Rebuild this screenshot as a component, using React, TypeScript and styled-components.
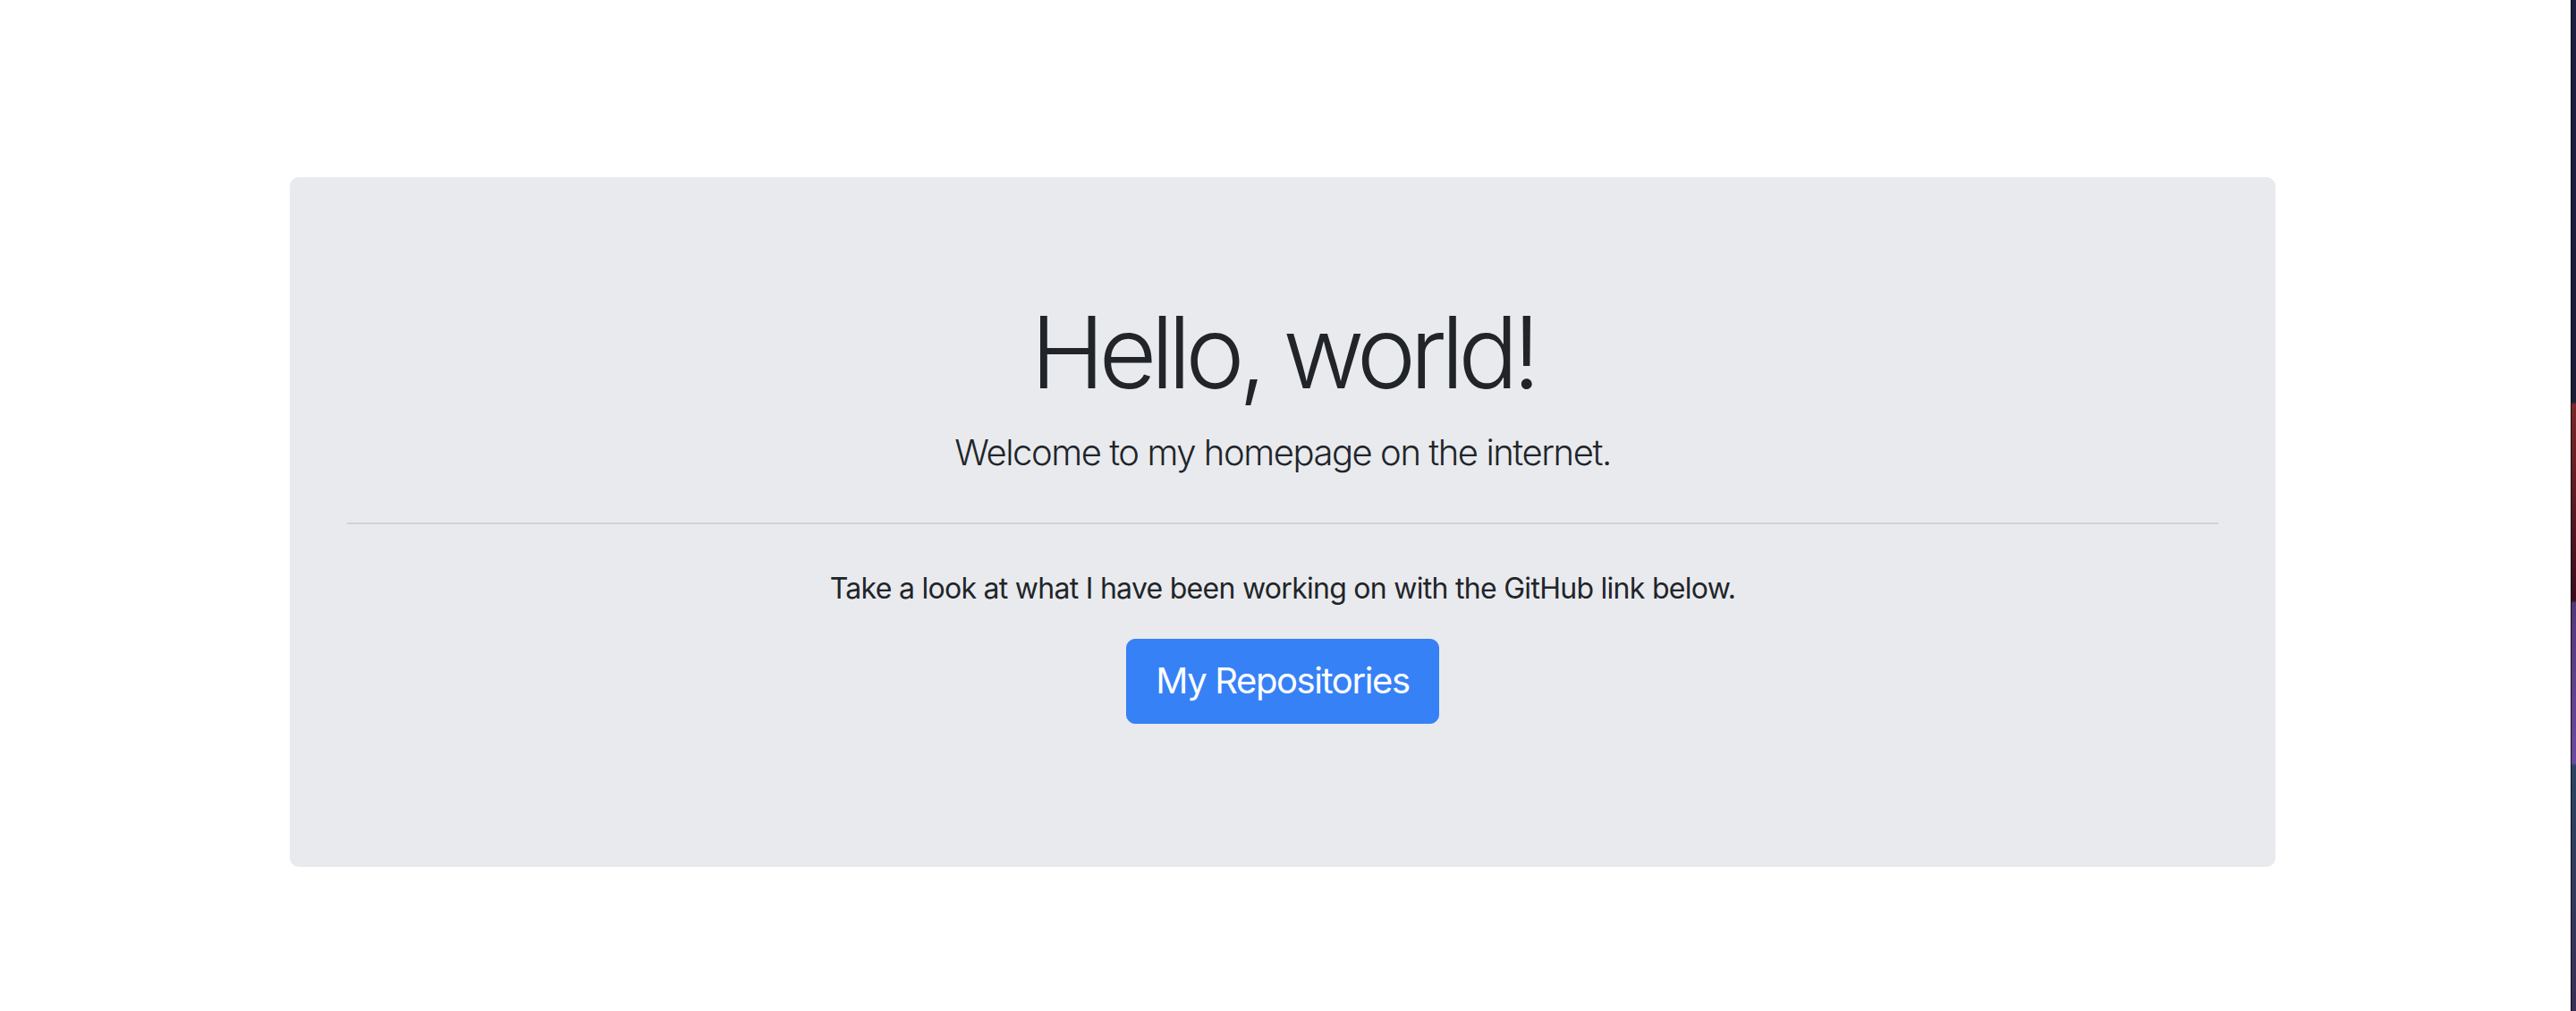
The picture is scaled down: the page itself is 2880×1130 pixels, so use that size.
import React from "react";
import styled, { createGlobalStyle } from "styled-components";

const Global = createGlobalStyle`
  html, body { margin: 0; padding: 0; background: #ffffff; }
  body {
    font-family: Inter, "Liberation Sans", sans-serif;
    color: #212529;
    -webkit-font-smoothing: antialiased;
  }
`;

const Screen = styled.div`
  display: flex;
  width: 2880px;
  height: 1130px;
  overflow: hidden;
`;

const Viewport = styled.main`
  width: 2868px;
  flex: none;
  padding-top: 198px;
  background: #ffffff;
  box-sizing: border-box;
`;

const Gap = styled.div`
  width: 6px;
  flex: none;
  background: #ffffff;
`;

const DesktopEdge = styled.div`
  flex: 1;
  border-left: 1px solid #0e0e14;
  background: linear-gradient(
    to bottom,
    #1e1e42 0px,
    #1b1b3a 449px,
    #7c2727 452px,
    #3a0c1c 671px,
    #53377a 674px,
    #6a4a9f 853px,
    #2b4466 856px,
    #3a2f58 1130px
  );
`;

const Jumbotron = styled.section`
  width: 2220px;
  margin: 0 auto;
  box-sizing: border-box;
  padding: 128px 64px;
  background: #e9eaee;
  border-radius: 10px;
  text-align: center;
`;

const Display = styled.h1`
  margin: 0 0 16px;
  font-size: 112px;
  font-weight: 300;
  line-height: 1.2;
  letter-spacing: -6.8px;
`;

const Lead = styled.p`
  margin: 0 0 32px;
  font-size: 40px;
  font-weight: 300;
  line-height: 1.5;
  letter-spacing: -1.45px;
`;

const Rule = styled.hr`
  margin: 48px 0;
  border: 0;
  border-top: 2px solid #d2d3d8;
`;

const Body = styled.p`
  margin: 0 0 32px;
  font-size: 32px;
  font-weight: 400;
  line-height: 1.5;
  letter-spacing: -0.72px;
`;

const ButtonRow = styled.p`
  margin: 0 0 32px;
  display: flex;
  justify-content: center;
`;

const PrimaryButton = styled.a`
  display: inline-block;
  box-sizing: border-box;
  height: 95px;
  padding: 16px 32px;
  font-size: 40px;
  line-height: 60px;
  font-weight: 400;
  letter-spacing: -1.4px;
  color: #ffffff;
  background: #3781f6;
  border: 1px solid #3781f6;
  border-radius: 10px;
  text-decoration: none;
`;

export default function App() {
  return (
    <>
      <Global />
      <Screen>
        <Viewport>
          <Jumbotron>
            <Display>Hello, world!</Display>
            <Lead>Welcome to my homepage on the internet.</Lead>
            <Rule />
            <Body>Take a look at what I have been working on with the GitHub link below.</Body>
            <ButtonRow>
              <PrimaryButton href="#">My Repositories</PrimaryButton>
            </ButtonRow>
          </Jumbotron>
        </Viewport>
        <Gap />
        <DesktopEdge />
      </Screen>
    </>
  );
}
